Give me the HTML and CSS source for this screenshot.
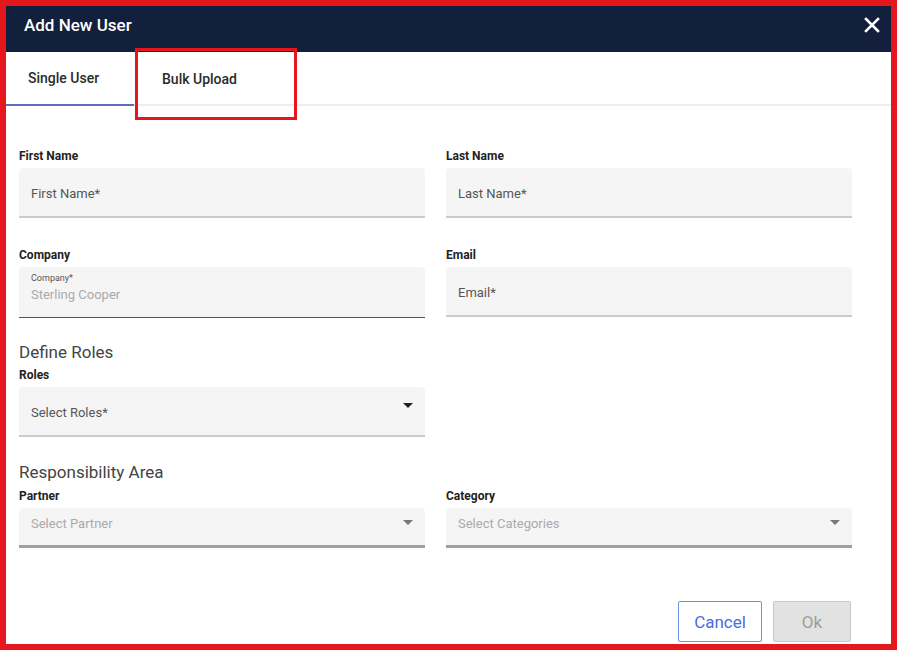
FILE: index.html
```html
<!DOCTYPE html>
<html>
<head>
<meta charset="utf-8">
<link rel="stylesheet" href="styles.css">
</head>
<body>
<div class="frame">
  <div class="header">
    <span class="title">Add New User</span>
    <svg class="close" width="16" height="16" viewBox="0 0 16 16"><path d="M2 2 L14 14 M14 2 L2 14" stroke="#fff" stroke-width="2.6" stroke-linecap="square"/></svg>
  </div>
  <div class="tabs">
    <div class="tab tab-single active">Single User</div>
    <div class="tab tab-bulk">Bulk Upload</div>
  </div>
  <div class="highlight"></div>
  <div class="form">
    <div class="grid">
      <div class="field">
        <div class="label">First Name</div>
        <div class="input"><span class="ph">First Name*</span></div>
      </div>
      <div class="field">
        <div class="label">Last Name</div>
        <div class="input"><span class="ph">Last Name*</span></div>
      </div>
      <div class="field row2">
        <div class="label">Company</div>
        <div class="input input-filled">
          <span class="float">Company*</span>
          <span class="value">Sterling Cooper</span>
        </div>
      </div>
      <div class="field row2">
        <div class="label">Email</div>
        <div class="input"><span class="ph">Email*</span></div>
      </div>
    </div>
    <div class="section">Define Roles</div>
    <div class="grid">
      <div class="field">
        <div class="label">Roles</div>
        <div class="input select"><span class="ph">Select Roles*</span><span class="arrow"></span></div>
      </div>
    </div>
    <div class="section section-area">Responsibility Area</div>
    <div class="grid">
      <div class="field">
        <div class="label">Partner</div>
        <div class="input select small"><span class="ph muted">Select Partner</span><span class="arrow light"></span></div>
      </div>
      <div class="field">
        <div class="label">Category</div>
        <div class="input select small"><span class="ph muted">Select Categories</span><span class="arrow light"></span></div>
      </div>
    </div>
    <div class="actions">
      <button class="btn btn-cancel">Cancel</button>
      <button class="btn btn-ok">Ok</button>
    </div>
  </div>
</div>
</body>
</html>
```

FILE: styles.css
```css
* { box-sizing: border-box; }
html, body { margin: 0; padding: 0; background: #fff; }
body { font-family: Roboto, "Liberation Sans", Arial, sans-serif; width: 897px; height: 653px; overflow: hidden; }

.frame {
  position: relative;
  width: 897px;
  height: 650px;
  border: 6px solid #e5161c;
  background: #fff;
}

.header {
  height: 46px;
  background: #121f3d;
  display: flex;
  align-items: center;
  justify-content: space-between;
  padding: 0 11px 0 18px;
}
.title { color: #fff; font-size: 17px; font-weight: 500; margin-top: -9px; }
.close { display: block; margin-top: -8px; }

.tabs {
  display: flex;
  height: 54px;
  border-bottom: 2px solid #eeeeee;
}
.tab {
  height: 54px;
  display: flex;
  align-items: center;
  font-size: 14px;
  font-weight: 500;
  color: #2b2b2b;
}
.tab-single { width: 128px; padding-left: 22px; }
.tab-bulk { padding-left: 28px; }
.tab.active { border-bottom: 2px solid #5d6cc7; margin-bottom: -2px; height: 54px; }

.highlight {
  position: absolute;
  left: 129px;
  top: 42px;
  width: 162px;
  height: 72px;
  border: 3px solid #e5161c;
  pointer-events: none;
}

.form { padding: 43px 39px 0 13px; }

.grid {
  display: grid;
  grid-template-columns: 406px 406px;
  column-gap: 21px;
}
.row2 { margin-top: 30px; }

.label {
  font-size: 12px;
  font-weight: 700;
  color: #222;
  line-height: 14px;
  margin-bottom: 5px;
}

.input {
  position: relative;
  height: 50px;
  background: #f5f5f5;
  border-radius: 4px 4px 0 0;
  border-bottom: 2px solid #cbcbcb;
  display: flex;
  align-items: center;
  padding: 2px 12px 0;
}
.ph { font-size: 13px; color: #555; }
.ph.muted { color: #aaa; }

.input-filled {
  flex-direction: column;
  align-items: flex-start;
  justify-content: flex-start;
  padding-top: 6px;
  height: 51px;
  border-bottom: 1px solid #555;
}
.float { font-size: 9px; color: #555; line-height: 11px; }
.value { font-size: 13px; color: #aaa; line-height: 16px; margin-top: 3px; }

.section {
  font-size: 17px;
  color: #444;
  line-height: 20px;
  margin-top: 24px;
  margin-bottom: 6px;
}
.section-area { margin-top: 25px; margin-bottom: 7px; }

.select { justify-content: space-between; }
.arrow {
  width: 0; height: 0;
  border-left: 5px solid transparent;
  border-right: 5px solid transparent;
  border-top: 5px solid #222;
  margin-top: -14px;
}
.arrow.light { border-top-color: #777; margin-top: -10px; }
.small { height: 40px; border-bottom: 3px solid #a0a0a0; }
.small .ph { margin-top: -8px; }

.actions {
  display: flex;
  justify-content: flex-end;
  gap: 11px;
  margin-top: 53px;
  padding-right: 1px;
}
.btn {
  font-family: Roboto, "Liberation Sans", Arial, sans-serif;
  height: 41px;
  font-size: 17px;
  border-radius: 2px;
  padding: 0;
}
.btn-cancel {
  width: 84px;
  background: #fff;
  border: 1.5px solid #6e8ef0;
  color: #4a6ce0;
}
.btn-ok {
  width: 78px;
  background: #e2e2e2;
  border: 1px solid #c8c8c8;
  color: #9d9d9d;
}
```
